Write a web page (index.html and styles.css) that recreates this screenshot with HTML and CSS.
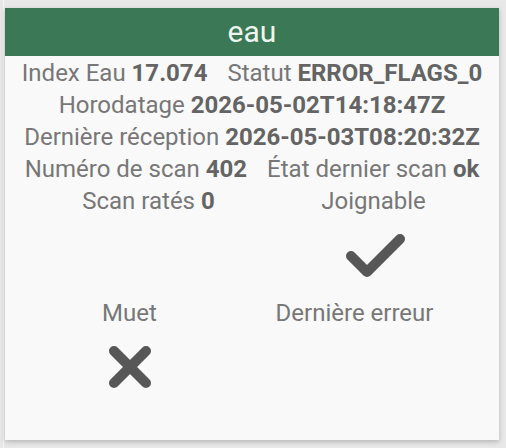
FILE: index.html
```html
<!DOCTYPE html>
<html lang="fr">
<head>
  <meta charset="UTF-8">
  <meta name="viewport" content="width=device-width, initial-scale=1.0">
  <title>eau</title>
  <link rel="stylesheet" href="styles.css">
</head>
<body>
  <div class="page">
    <div class="card">
      <div class="card-title">eau</div>

      <div class="card-body">
        <div class="row">
          <span class="field">Index Eau <b>17.074</b></span>
          <span class="field">Statut <b>ERROR_FLAGS_0</b></span>
        </div>
        <div class="row">
          <span class="field">Horodatage <b>2026-05-02T14:18:47Z</b></span>
        </div>
        <div class="row">
          <span class="field">Dernière réception <b>2026-05-03T08:20:32Z</b></span>
        </div>
        <div class="row">
          <span class="field">Numéro de scan <b>402</b></span>
          <span class="field">État dernier scan <b>ok</b></span>
        </div>

        <!-- Boolean flags, icon under the label -->
        <div class="flags flags-a">
          <div class="field">Scan ratés <b>0</b></div>
          <div class="flag">
            Joignable
            <svg class="icon icon-check" width="64" height="48" viewBox="0 0 64 48">
              <polyline points="9,24 25,40 58,7" />
            </svg>
          </div>
        </div>
        <div class="flags flags-b">
          <div class="flag">
            Muet
            <svg class="icon icon-cross" width="44" height="44" viewBox="0 0 44 44">
              <line x1="6" y1="6" x2="38" y2="38" />
              <line x1="38" y1="6" x2="6" y2="38" />
            </svg>
          </div>
          <div class="flag">Dernière erreur</div>
        </div>
      </div>
    </div>
  </div>
</body>
</html>
```

FILE: styles.css
```css
body {
  margin: 0;
  background-color: #e8e8e9;
  font-family: Roboto, "Liberation Sans", sans-serif;
}

/* thin light strip on the left edge */
.page {
  margin-left: 3px;
  border-left: 1px solid #f6f6f6;
  padding: 8px 7px 0 1px;
  height: 440px;
}

.card {
  background: #f9f9f9;
  box-shadow: 0 2px 5px rgba(0, 0, 0, 0.22);
}

.card-title {
  height: 48px;
  line-height: 48px;
  background: #3b7856;
  color: #eef5ef;
  font-size: 30px;
  text-align: center;
}

.card-body {
  padding: 1px 0 51px;
  color: #777;
  font-size: 24px;
}

.row {
  display: flex;
  justify-content: center;
  gap: 20px;
  line-height: 32px;
}

.field b {
  color: #646464;
  font-weight: 700;
}

.flags {
  display: grid;
  grid-template-columns: 225px 225px;
  line-height: 32px;
  text-align: center;
}

.flags-a {
  margin-left: 31px;
}

.flags-b {
  margin-left: 12px;
  margin-top: 17px;
}

.icon {
  display: block;
  margin: 0 auto;
  fill: none;
  stroke: #575757;
  stroke-width: 10;
  stroke-linecap: round;
  stroke-linejoin: round;
}

.icon-check {
  margin-top: 15px;
}

.icon-cross {
  margin-top: 16px;
}
```
